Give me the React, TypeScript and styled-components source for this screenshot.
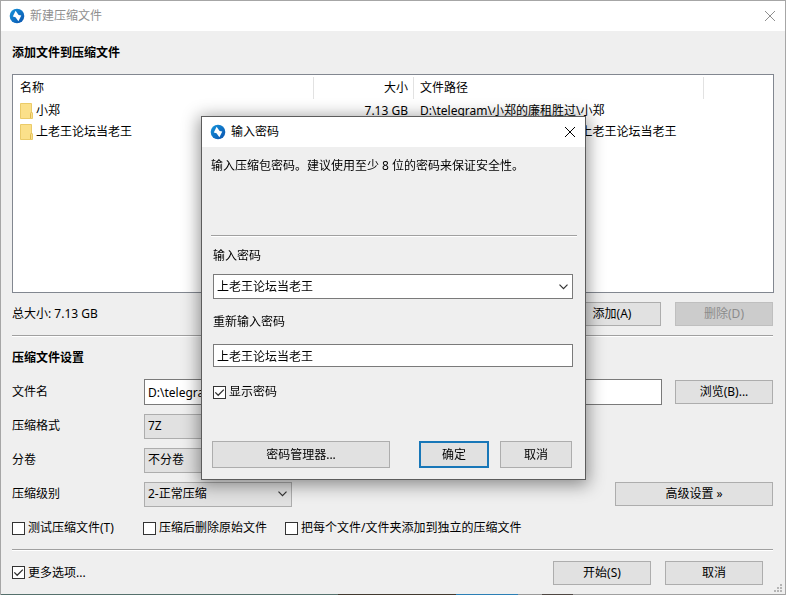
import React, { useState } from "react";
import styled, { createGlobalStyle, css } from "styled-components";

const GlobalStyle = createGlobalStyle`
  *, *::before, *::after { box-sizing: border-box; }
  body { margin: 0; background: #efefef; }
  body, button, input, select, table {
    font-family: "Noto Sans", "Noto Sans CJK SC", sans-serif;
    font-size: 12px;
    line-height: 18px;
    color: #000;
  }
`;

const Frame = styled.div`
  position: relative;
`;

const Window = styled.main`
  display: flex;
  flex-direction: column;
  min-height: 100vh;
  background: #efefef;
  border: 1px solid #a6a6a6;
  border-bottom: 0;
`;

const TitleBar = styled.header<{ $inactive?: boolean }>`
  display: flex;
  align-items: center;
  gap: 5px;
  height: 30px;
  padding: 0 9px 0 8px;
  background: #fff;
  color: ${(p) => (p.$inactive ? "#8f8f8f" : "#000")};
`;

const Title = styled.h1`
  flex: 1;
  margin: 0;
  font-size: 12px;
  font-weight: 400;
`;

const CloseButton = styled.button`
  display: flex;
  padding: 0;
  border: 0;
  background: none;
  color: inherit;
`;

const Body = styled.div`
  display: flex;
  flex: 1;
  flex-direction: column;
  padding: 0 12px 0 11px;
`;

const SectionTitle = styled.h2<{ $tall?: boolean }>`
  display: flex;
  align-items: center;
  height: ${(p) => (p.$tall ? 43 : 34)}px;
  margin: 0;
  font-size: 12px;
  font-weight: 700;
`;

const FileList = styled.div`
  flex: 1;
  min-height: 218px;
  margin-right: -1px;
  border: 1px solid #828790;
  background: #fff;
  overflow: hidden;
`;

const FileTable = styled.table`
  width: 100%;
  table-layout: fixed;
  border-collapse: collapse;
`;

const Column = styled.col<{ $width?: number }>`
  width: ${(p) => (p.$width ? `${p.$width}px` : "auto")};
`;

const HeadCell = styled.th<{ $right?: boolean }>`
  height: 25px;
  padding: 0 6px;
  text-align: ${(p) => (p.$right ? "right" : "left")};
  font-weight: 400;
  background: linear-gradient(#e2e2e2, #e2e2e2) right / 1px 22px no-repeat;
  &:first-child { padding-left: 7px; }
  &:last-child { background: none; }
`;

const Cell = styled.td<{ $right?: boolean }>`
  height: 21px;
  padding: 0 6px;
  text-align: ${(p) => (p.$right ? "right" : "left")};
  white-space: nowrap;
  &:first-child { padding-left: 7px; }
`;

const FileName = styled.span`
  display: flex;
  align-items: center;
  gap: 3px;
`;

const Divider = styled.hr<{ $spaced?: boolean }>`
  width: 100%;
  height: 2px;
  margin: ${(p) => (p.$spaced ? "4px 0 0" : "0")};
  border: 0;
  border-top: 1px solid #a0a0a0;
  background: #fff;
`;

const Bar = styled.div`
  display: flex;
  align-items: center;
  gap: 14px;
  height: 42px;
`;

const Footer = styled(Bar)`
  height: 43px;
  padding-right: 10px;
`;

const Spacer = styled.span`
  flex: 1;
`;

const SettingsGroup = styled.section`
  padding-top: 4px;
`;

const Row = styled.div`
  display: flex;
  align-items: center;
  height: 34px;
`;

const RowLabel = styled.label`
  flex: 0 0 132px;
`;

const field = css`
  min-width: 0;
  border: 1px solid #7a7a7a;
  border-radius: 0;
  background: #fff;
  outline: none;
`;

const TextField = styled.input<{ $compact?: boolean }>`
  ${field}
  width: 100%;
  height: ${(p) => (p.$compact ? 23 : 26)}px;
  padding: 0 3px;
`;

const Button = styled.button<{ $width: number; $large?: boolean; $primary?: boolean; $after?: boolean }>`
  flex: 0 0 ${(p) => p.$width}px;
  height: ${(p) => (p.$large ? 27 : 24)}px;
  margin-left: ${(p) => (p.$after ? 13 : 0)}px;
  padding: 0;
  border: ${(p) => (p.$primary ? "2px solid #1877b8" : "1px solid #adadad")};
  border-radius: 0;
  background: #e1e1e1;
  &:disabled {
    border-color: #bfbfbf;
    background: #cccccc;
    color: #8b8b8b;
  }
`;

const SelectBox = styled.span`
  display: grid;
  align-items: center;
  width: 148px;
  & > * { grid-area: 1 / 1; }
  & > svg { justify-self: end; margin-right: 5px; pointer-events: none; }
`;

const Select = styled.select`
  appearance: none;
  width: 100%;
  height: 25px;
  padding: 0 3px;
  border: 1px solid #adadad;
  border-radius: 0;
  background: #e1e1e1;
`;

const CheckLabel = styled.label`
  display: inline-flex;
  align-items: center;
  gap: 3px;
  white-space: nowrap;
`;

const CheckBox = styled.input`
  appearance: none;
  width: 13px;
  height: 13px;
  margin: 0;
  border: 1px solid #333;
  background: #fff;
`;

const CheckFrame = styled.span`
  display: grid;
  & > * { grid-area: 1 / 1; }
  & > svg { pointer-events: none; }
`;

const Options = styled.div`
  display: grid;
  grid-template-columns: 131px 142px 1fr;
  align-items: center;
  height: 34px;
`;

const Grip = styled.svg`
  position: absolute;
  right: 3px;
  bottom: 2px;
`;

const DesktopEdge = styled.div`
  height: 1px;
  background: linear-gradient(
    90deg,
    #55706c 0 43%,
    #41392f 43% 58%,
    #2b7fb5 58% 66%,
    #9a9a9a 66% 69%,
    #4e4642 69% 73%,
    #a0a0a0 73%
  );
`;

const Overlay = styled.div`
  position: fixed;
  inset: 0;
  display: grid;
  place-items: center;
  padding: 1px 0 0 1px;
`;

const Dialog = styled.section`
  width: 385px;
  max-width: 100%;
  border: 1px solid #5c5c5c;
  background: #efefef;
  box-shadow: 0 3px 16px 2px rgba(0, 0, 0, 0.42);
`;

const DialogBody = styled.div`
  padding: 0 8px 11px 9px;
`;

const Hint = styled.p`
  height: 88px;
  margin: 0;
  padding-top: 10px;
`;

const Form = styled.form`
  display: flex;
  flex-direction: column;
  padding: 0 4px 0 2px;
`;

const FieldLabel = styled.label<{ $tall?: boolean }>`
  display: flex;
  align-items: center;
  height: ${(p) => (p.$tall ? 44 : 37)}px;
`;

const Combo = styled.div`
  ${field}
  display: flex;
  height: 25px;
  margin-bottom: 1px;
`;

const ComboInput = styled.input`
  flex: 1;
  min-width: 0;
  padding: 0 3px;
  border: 0;
  background: none;
  outline: none;
`;

const ComboButton = styled.button`
  display: flex;
  align-items: center;
  padding: 0 4px;
  border: 0;
  background: none;
`;

const ShowRow = styled.div`
  display: flex;
  align-items: center;
  height: 50px;
`;

const Actions = styled.div`
  display: flex;
  gap: 11px;
  padding: 24px 5px 0 1px;
`;

function AppIcon() {
  return (
    <svg width="16" height="16" viewBox="0 0 16 16" aria-hidden="true">
      <defs>
        <linearGradient id="disc" x1="0" y1="0" x2="1" y2="1">
          <stop offset="0" stopColor="#1595dc" />
          <stop offset="1" stopColor="#0b52ad" />
        </linearGradient>
      </defs>
      <circle cx="8" cy="8" r="7.3" fill="url(#disc)" />
      <path d="M6.6 2.8 9.6 6.9 12.3 7.6 9.4 13.2 6.5 9.2 3.8 8.4Z" fill="#fff" />
    </svg>
  );
}

function CloseIcon() {
  return (
    <svg width="12" height="12" viewBox="0 0 12 12" fill="none" stroke="currentColor" aria-hidden="true">
      <path d="M1 1 11 11M11 1 1 11" />
    </svg>
  );
}

function FolderIcon() {
  return (
    <svg width="13" height="16" viewBox="0 0 13 16" aria-hidden="true">
      <path d="M.5.5H11.5V9L12.5 10V15.5H.5Z" fill="#fbe08a" stroke="#ebcb69" />
      <path d="M10.5 15V10.5L11.5 9" fill="none" stroke="#dfb950" />
    </svg>
  );
}

function Chevron() {
  return (
    <svg width="9" height="6" viewBox="0 0 9 6" fill="none" stroke="#333" strokeWidth="1.2" aria-hidden="true">
      <path d="M.5.7 4.5 4.7 8.5.7" />
    </svg>
  );
}

function Check({ label, initial = false }: { label: string; initial?: boolean }) {
  const [checked, setChecked] = useState(initial);
  return (
    <CheckLabel>
      <CheckFrame>
        <CheckBox type="checkbox" checked={checked} onChange={(e) => setChecked(e.target.checked)} />
        {checked && (
          <svg width="13" height="13" viewBox="0 0 13 13" fill="none" stroke="#333" strokeWidth="1.3" aria-hidden="true">
            <path d="M2.3 6.4 5.2 9.3 10.8 3.6" />
          </svg>
        )}
      </CheckFrame>
      {label}
    </CheckLabel>
  );
}

function SelectRow({ id, label, value, children }: { id: string; label: string; value: string; children?: React.ReactNode }) {
  return (
    <Row>
      <RowLabel htmlFor={id}>{label}</RowLabel>
      <SelectBox>
        <Select id={id} defaultValue={value}>
          <option>{value}</option>
        </Select>
        <Chevron />
      </SelectBox>
      {children}
    </Row>
  );
}

const base = "D:\\telegram\\小郑的廉租胜过\\";
const files = [
  { name: "小郑", size: "7.13 GB" },
  { name: "上老王论坛当老王", size: "" },
];

function PasswordDialog() {
  const [password, setPassword] = useState("上老王论坛当老王");
  const [repeat, setRepeat] = useState("上老王论坛当老王");
  return (
    <Overlay>
      <Dialog role="dialog" aria-labelledby="dialog-title">
        <TitleBar>
          <AppIcon />
          <Title id="dialog-title">输入密码</Title>
          <CloseButton aria-label="关闭"><CloseIcon /></CloseButton>
        </TitleBar>
        <DialogBody>
          <Hint>输入压缩包密码。建议使用至少 8 位的密码来保证安全性。</Hint>
          <Divider />
          <Form onSubmit={(e) => e.preventDefault()}>
            <FieldLabel htmlFor="password">输入密码</FieldLabel>
            <Combo>
              <ComboInput id="password" value={password} onChange={(e) => setPassword(e.target.value)} />
              <ComboButton type="button" aria-label="展开"><Chevron /></ComboButton>
            </Combo>
            <FieldLabel $tall htmlFor="repeat">重新输入密码</FieldLabel>
            <TextField $compact id="repeat" value={repeat} onChange={(e) => setRepeat(e.target.value)} />
            <ShowRow><Check label="显示密码" initial /></ShowRow>
          </Form>
          <Actions>
            <Button $width={178} $large>密码管理器...</Button>
            <Spacer />
            <Button $width={70} $large $primary>确定</Button>
            <Button $width={72} $large>取消</Button>
          </Actions>
        </DialogBody>
      </Dialog>
    </Overlay>
  );
}

function Settings() {
  return (
    <SettingsGroup>
      <SectionTitle>压缩文件设置</SectionTitle>
      <Row>
        <RowLabel htmlFor="filename">文件名</RowLabel>
        <TextField id="filename" defaultValue={base + "小郑.7z"} />
        <Button $width={98} $after>浏览(B)...</Button>
      </Row>
      <SelectRow id="format" label="压缩格式" value="7Z" />
      <SelectRow id="volume" label="分卷" value="不分卷" />
      <SelectRow id="level" label="压缩级别" value="2-正常压缩">
        <Spacer />
        <Button $width={158}>高级设置 »</Button>
      </SelectRow>
      <Options>
        <Check label="测试压缩文件(T)" />
        <Check label="压缩后删除原始文件" />
        <Check label="把每个文件/文件夹添加到独立的压缩文件" />
      </Options>
    </SettingsGroup>
  );
}

export default function App() {
  return (
    <Frame>
      <GlobalStyle />
      <Window>
        <TitleBar $inactive>
          <AppIcon />
          <Title>新建压缩文件</Title>
          <CloseButton aria-label="关闭"><CloseIcon /></CloseButton>
        </TitleBar>
        <Body>
          <SectionTitle $tall>添加文件到压缩文件</SectionTitle>
          <FileList>
            <FileTable>
              <colgroup>
                <Column $width={301} />
                <Column $width={100} />
                <Column $width={290} />
                <Column />
              </colgroup>
              <thead>
                <tr>
                  <HeadCell>名称</HeadCell>
                  <HeadCell $right>大小</HeadCell>
                  <HeadCell>文件路径</HeadCell>
                  <HeadCell />
                </tr>
              </thead>
              <tbody>
                {files.map((f) => (
                  <tr key={f.name}>
                    <Cell><FileName><FolderIcon />{f.name}</FileName></Cell>
                    <Cell $right>{f.size}</Cell>
                    <Cell>{base + f.name}</Cell>
                    <Cell />
                  </tr>
                ))}
              </tbody>
            </FileTable>
          </FileList>
          <Bar>
            总大小: 7.13 GB
            <Spacer />
            <Button $width={98}>添加(A)</Button>
            <Button $width={98} disabled>删除(D)</Button>
          </Bar>
          <Divider />
          <Settings />
          <Divider $spaced />
          <Footer>
            <Check label="更多选项..." initial />
            <Spacer />
            <Button $width={98}>开始(S)</Button>
            <Button $width={98}>取消</Button>
          </Footer>
        </Body>
        <DesktopEdge />
      </Window>
      <Grip width="9" height="9" viewBox="0 0 9 9" fill="#b5b5b5" aria-hidden="true">
        <path d="M6 0h2v2H6ZM3 3h2v2H3ZM6 3h2v2H6ZM0 6h2v2H0ZM3 6h2v2H3ZM6 6h2v2H6Z" />
      </Grip>
      <PasswordDialog />
    </Frame>
  );
}
